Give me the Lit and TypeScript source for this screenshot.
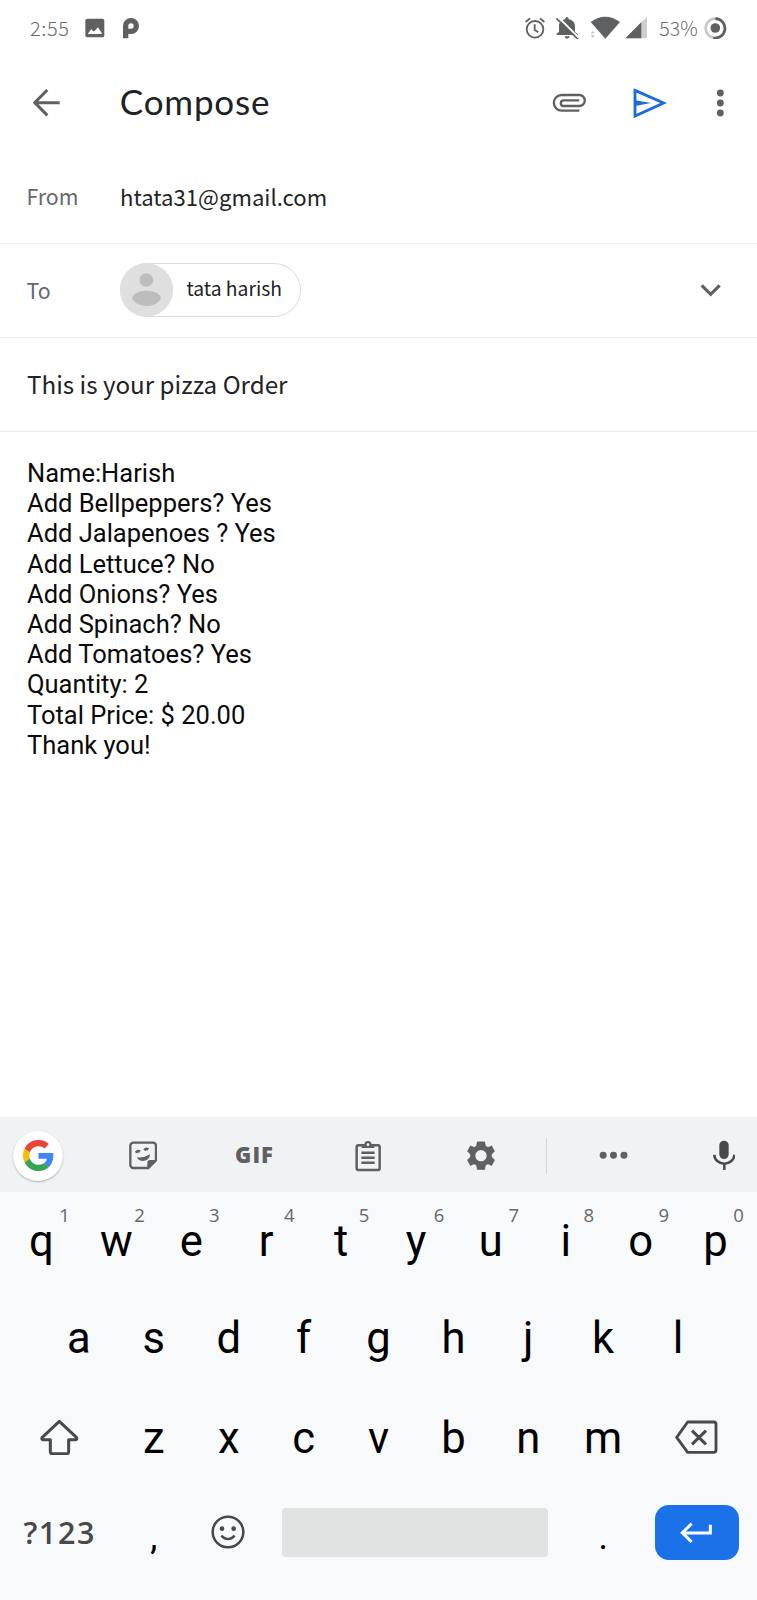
import { LitElement, html, css, svg } from "lit";
import { customElement } from "lit/decorators.js";

// Icons are drawn on a grid three times finer than the page.
const icon = (x: number, y: number, w: number, h: number, body: unknown) => html`<svg
  class="icon" width=${w / 3} height=${h / 3} viewBox="${x} ${y} ${w} ${h}" fill="none">${body}</svg>`;

const GREY = "#5f6061";
const DARK = "#48494b";

const picture = icon(255, 54, 60, 60, svg`
  <rect x="256" y="56" width="57" height="56" rx="6" fill=${GREY}/>
  <path d="M263 102 L274 87 L279 94 L283 94 L294 82 L307 102 Z" fill="#fff"/>`);
const parking = icon(369, 52, 50, 66, svg`
  <path d="M377 116 V79 a16 16 0 1 1 16 16 H385" stroke=${GREY} stroke-width="16"/>`);
const alarm = icon(75, 50, 60, 68, svg`
  <circle cx="105" cy="87" r="25" stroke=${GREY} stroke-width="5.5"/>
  <path d="M104 72 V89 L115 96 M77 65 L90 54 M120 54 L133 65" stroke=${GREY} stroke-width="5.5"/>`);
const bellOff = icon(167, 50, 70, 68, svg`
  <path d="M169 104 V100 L176 94 V78 C176 66 184 59 195 57 V55 a5 5 0 0 1 10 0 V57 C216 59 224 67 224 78 V94 L233 102 V104 Z M193 108 h15 a7.500 7.500 0 0 1 -15 0" fill=${GREY}/>
  <path d="M172 49 L238 115" stroke="#fff" stroke-width="6"/>
  <path d="M168 54 L233 117" stroke=${GREY} stroke-width="5"/>`);
const wifi = icon(270, 50, 92, 70, svg`
  <path d="M272 68 Q316 36 360 68 L316 118 Z" fill=${GREY}/>
  <path d="M272 102 l6 -7 l6 7 Z M272 108 l6 7 l6 -7 Z" fill="#bdbdbd"/>`);
const signal = icon(374, 50, 68, 70, svg`
  <path d="M375 117 L441 51 V117 Z" fill="#cfcfcf"/><path d="M375 117 L423 69 V117 Z" fill=${GREY}/>`);
const battery = icon(614, 50, 68, 68, svg`
  <circle cx="648" cy="84" r="29" stroke="#c9c9c9" stroke-width="8"/>
  <path d="M648 55 a29 29 0 1 1 -6 57.400" stroke=${GREY} stroke-width="8"/>
  <circle cx="648" cy="83" r="14.500" fill=${GREY}/>`);

const back = icon(100, 268, 82, 82, svg`
  <path d="M180 309 H106 M143 271 L105 309 L143 347" stroke=${GREY} stroke-width="9"/>`);
const clip = icon(157, 279, 104, 60, svg`
  <path d="M239 332 H186 a23.500 23.500 0 0 1 0 -47 H239 a16.500 16.500 0 0 1 0 33 H192 a8.500 8.500 0 0 1 0 -17 H239" stroke=${GREY} stroke-width="7"/>`);
const send = icon(398, 258, 102, 96, svg`
  <path d="M404 268 L490 306 L404 345 Z" stroke="#1b6bdc" stroke-width="8.500"/>
  <path d="M404 298 L452 306 L404 315 Z" fill="#1b6bdc"/>`);
const dots = icon(648, 266, 26, 86, svg`
  ${[278, 308, 338].map((y) => svg`<circle cx="661" cy=${y} r="10.300" fill=${GREY}/>`)}`);
const chevron = icon(30, 40, 64, 42, svg`
  <path d="M35 47 L62 74 L89 47" stroke=${GREY} stroke-width="9.500"/>`);
const avatar = icon(360, 99, 159, 161, svg`
  <circle cx="439.500" cy="179.500" r="80" fill="#dfdfdf"/>
  <circle cx="439" cy="150" r="20.500" fill="#bdbdbd"/>
  <path d="M396 203 C405 175 474 175 483 203 C472 236 407 236 396 203 Z" fill="#bdbdbd"/>`);

const google = html`<svg class="icon" width="31" height="31" viewBox="0 0 48 48">
  <path fill="#e94335" d="M24 9.500c3.540 0 6.710 1.220 9.210 3.600l6.850-6.850C35.900 2.380 30.470 0 24 0 14.620 0 6.510 5.380 2.560 13.220l7.980 6.190C12.430 13.720 17.740 9.500 24 9.500z"/>
  <path fill="#4285f4" d="M46.980 24.550c0-1.570-.15-3.090-.38-4.550H24v9.020h12.940c-.58 2.960-2.260 5.480-4.780 7.180l7.730 6c4.510-4.180 7.090-10.360 7.090-17.650z"/>
  <path fill="#fbbc05" d="M10.530 28.590c-.48-1.450-.76-2.990-.76-4.590s.27-3.140.76-4.590l-7.980-6.190C.92 16.460 0 20.120 0 24c0 3.880.92 7.540 2.560 10.780l7.970-6.190z"/>
  <path fill="#34a353" d="M24 48c6.480 0 11.930-2.130 15.890-5.810l-7.730-6c-2.150 1.450-4.920 2.300-8.160 2.300-6.260 0-11.570-4.220-13.470-9.910l-7.980 6.190C6.510 42.620 14.620 48 24 48z"/></svg>`;
const sticker = icon(387, 124, 86, 86, svg`
  <path d="M400 129 H459 a9 9 0 0 1 9 9 V182 L445 205 H400 a9 9 0 0 1 -9 -9 V138 a9 9 0 0 1 9 -9 Z" stroke=${GREY} stroke-width="7"/>
  <path d="M442 207 V189 a8 8 0 0 1 8 -8 H470 Z" fill=${GREY}/>
  <path d="M410 173 Q432 176 450 164 C449 187 418 190 410 173 Z" fill=${GREY}/>
  <path d="M408 159 q5 -7 12 -3 M433 152 q5 -7 12 -3" stroke=${GREY} stroke-width="8"/>`);
const clipboard = icon(46, 38, 78, 96, svg`
  <rect x="51" y="54" width="69" height="74" rx="5" stroke=${GREY} stroke-width="7.500"/>
  <path d="M66 52 H74 a11 11 0 0 1 22 0 H104 V62 H66 Z" fill=${GREY}/><circle cx="85" cy="52" r="4" fill="#f1f2f4"/>
  <path d="M65 76 H105 M65 91 H105 M65 106 H105" stroke=${GREY} stroke-width="7.500"/>`);
const gear = icon(269, 124, 84, 88, svg`
  <path d="M300 126 H322 L325 139 L332 143 L343 138 L352 155 L343 164 V172 L352 181 L343 198 L332 193 L325 197 L322 210 H300 L297 197 L290 193 L279 198 L270 181 L279 172 V164 L270 155 L279 138 L290 143 L297 139 Z" fill=${GREY} stroke=${GREY} stroke-width="1" stroke-linejoin="round"/>
  <circle cx="311" cy="168" r="17" fill="#f1f2f4"/>`);
const more = icon(667, 153, 88, 26, svg`
  ${[679.5, 710.5, 742].map((x) => svg`<circle cx=${x} cy="166" r="10.500" fill=${GREY}/>`)}`);
const mic = icon(1008, 118, 68, 92, svg`
  <rect x="1027" y="120" width="28" height="55" rx="14" fill=${DARK}/>
  <path d="M1012 162 a30 27 0 0 0 60 0 M1042 189 V208" stroke=${DARK} stroke-width="7.500"/>`);

const shift = icon(120, 415, 116, 110, svg`
  <path d="M178 422 L230 471 Q232 477 226 477 H206 V513 Q206 519 200 519 H157 Q151 519 151 513 V477 H130 Q124 477 126 471 Z" stroke=${DARK} stroke-width="9" stroke-linejoin="round"/>`);
const erase = icon(895, 424, 128, 102, svg`
  <path d="M933 430 H1011 Q1018 430 1018 437 V514 Q1018 521 1011 521 H933 L900 476 Z" stroke=${DARK} stroke-width="8.500" stroke-linejoin="round"/>
  <path d="M946 456 L988 497 M988 456 L946 497" stroke=${DARK} stroke-width="9"/>`);
const smile = icon(634, 706, 102, 102, svg`
  <circle cx="685" cy="757" r="46" stroke=${DARK} stroke-width="7.500"/>
  <circle cx="667" cy="747" r="7" fill=${DARK}/><circle cx="702" cy="747" r="7" fill=${DARK}/>
  <path d="M665 768 Q685 789 705 768" stroke=${DARK} stroke-width="7"/>`);
const enter = icon(909, 730, 98, 64, svg`
  <path d="M1000 738 V763 H918 M944 735 L916 762 L944 790" stroke="#fff" stroke-width="9"/>`);

const MESSAGE = [
  "Name:Harish",
  "Add Bellpeppers? Yes",
  "Add Jalapenoes ? Yes",
  "Add Lettuce? No",
  "Add Onions? Yes",
  "Add Spinach? No",
  "Add Tomatoes? Yes",
  "Quantity: 2",
  "Total Price: $ 20.00",
  "Thank you!",
];

@customElement("key-board")
class KeyBoard extends LitElement {
  static styles = css`
    :host { display: block; background: #f8f9fb; height: 483px; font-family: Roboto, sans-serif; }
    .icon { display: block; flex: none; }
    .tools {
      height: 75px; background: #f1f2f4; display: grid; align-items: center; justify-items: center;
      grid-template-columns: 76px 134px 89px 138px 87px 45px 89px 33px 66px; box-sizing: border-box;
      padding-top: 2px;
    }
    .google {
      width: 50px; height: 50px; border-radius: 50%; background: #fff; display: grid;
      place-items: center; box-shadow: 0 1px 2px rgba(0, 0, 0, 0.28);
    }
    .gif { font: 800 22px/28px "Open Sans", sans-serif; letter-spacing: 1px; color: #5f6061; margin-top: -3px; }
    .rule { width: 1px; height: 36px; background: #d5d7d9; }
    .row { display: flex; justify-content: center; height: 98.3px; padding: 0 4px; }
    .key {
      position: relative; width: 74.9px; height: 99px; display: flex; align-items: center;
      justify-content: center; font-size: 43.6px; line-height: 99px; color: #000;
    }
    .hint {
      position: absolute; left: 51.5px; top: 13px; width: 18px; text-align: center;
      font: 500 18.5px/20px "Open Sans", sans-serif; color: #65676a;
    }
    .wide { width: 112.3px; }
    .edge { height: 97px; }
    .edge .icon { margin-right: 1px; }
    .row:nth-of-type(3) .key { margin-top: -1px; }
    .space { width: 299.6px; }
    .bar { width: 266px; height: 49px; border-radius: 4px; background: #e0e1e1; margin-right: 1px; }
    .low { height: 91px; }
    .low > .icon { margin-right: 1px; }
    .symbols { font: 600 30.5px/90px "Open Sans", sans-serif; letter-spacing: 1.6px; color: #48494b; box-sizing: border-box; padding-right: 1px; }
    .mark { font-size: 36px; line-height: 101px; height: 101px; }
    .enter {
      width: 84px; height: 55px; border-radius: 14px; background: #1b72e8; display: grid;
      place-items: center;
    }
  `;
  key(letter: string, hint = "") {
    return html`<div class="key">${letter}${hint ? html`<span class="hint">${hint}</span>` : ""}</div>`;
  }
  render() {
    return html`
      <div class="tools">
        <div class="google">${google}</div>${sticker}<span class="gif">GIF</span>${clipboard}${gear}
        <div class="rule"></div>${more}<span></span>${mic}
      </div>
      <div class="row">${[..."qwertyuiop"].map((c, i) => this.key(c, String((i + 1) % 10)))}</div>
      <div class="row">${[..."asdfghjkl"].map((c) => this.key(c))}</div>
      <div class="row">
        <div class="key wide edge">${shift}</div>
        ${[..."zxcvbnm"].map((c) => this.key(c))}
        <div class="key wide edge">${erase}</div>
      </div>
      <div class="row">
        <div class="key wide low symbols">?123</div>
        <div class="key mark">,</div>
        <div class="key low">${smile}</div>
        <div class="key space low"><div class="bar"></div></div>
        <div class="key mark">.</div>
        <div class="key wide low"><div class="enter">${enter}</div></div>
      </div>
    `;
  }
}

@customElement("app-root")
class AppRoot extends LitElement {
  static styles = css`
    :host {
      display: flex; flex-direction: column; height: 1600px; background: #fff; overflow: hidden;
      color: #222325; font-family: "Noto Sans CJK SC", "Noto Sans", sans-serif;
    }
    .icon { display: block; flex: none; }
    .status {
      height: 56px; display: flex; align-items: center; padding: 0 30px; color: #6b6c6d;
      font-size: 20px; font-weight: 300; line-height: 24px;
    }
    .time { width: 54.5px; letter-spacing: 0.6px; }
    .app { margin-left: 18px; }
    .right { margin-left: auto; display: flex; align-items: center; }
    .bell { margin-left: 10.5px; }
    .wifi { margin-left: 11px; }
    .bars { margin-left: 4px; }
    .percent { width: 45px; margin-left: 12px; font-size: 19.5px; }
    .head { height: 94px; display: flex; align-items: center; padding: 0 32px 0 33px; box-sizing: border-box; }
    .title { font: 400 35px/60px Lato, sans-serif; letter-spacing: 0.8px; margin: -5px 0 0 59.5px; color: #202124; }
    .attach { margin-left: auto; }
    .send { margin-left: 46px; }
    .more { margin-left: 49.500px; }
    .field {
      height: 94px; box-sizing: border-box; border-bottom: 1px solid #ececec; display: flex;
      align-items: center; padding: 0 36px 0 27px; font-size: 22.1px; line-height: 32px;
    }
    .from { padding-bottom: 2px; }
    .label { width: 93.5px; font-size: 21.3px; color: #66686b; margin-left: -0.5px; }
    .to { margin-top: -2px; }
    .chip {
      height: 54px; width: 181.500px; box-sizing: border-box; border: 1px solid #dcdcdc; border-left: 0;
      border-radius: 27px; display: flex; align-items: center; font-size: 19.3px; margin: 0 0 1px -0.5px;
    }
    .name { margin: -4px 0 0 14px; white-space: nowrap; }
    .chevron { margin: -1px 0 0 auto; }
    .subject { font-size: 24.2px; padding-bottom: 1px; }
    .body {
      flex: 1; padding: 26px 27px 0; color: #0a0a0a; font: 25.5px/30.2px Roboto, sans-serif;
    }
  `;
  render() {
    return html`
      <div class="status">
        <span class="time">2:55</span>${picture}<span class="app">${parking}</span>
        <div class="right">
          ${alarm}<span class="bell">${bellOff}</span><span class="wifi">${wifi}</span
          ><span class="bars">${signal}</span><span class="percent">53%</span>${battery}
        </div>
      </div>
      <div class="head">
        ${back}<span class="title">Compose</span>
        <span class="attach">${clip}</span><span class="send">${send}</span><span class="more">${dots}</span>
      </div>
      <div class="field from"><span class="label">From</span><span>htata31@gmail.com</span></div>
      <div class="field">
        <span class="label to">To</span>
        <div class="chip">${avatar}<span class="name">tata harish</span></div>
        <span class="chevron">${chevron}</span>
      </div>
      <div class="field subject">This is your pizza Order</div>
      <div class="body">${MESSAGE.map((line) => html`<div>${line}</div>`)}</div>
      <key-board></key-board>
    `;
  }
}
